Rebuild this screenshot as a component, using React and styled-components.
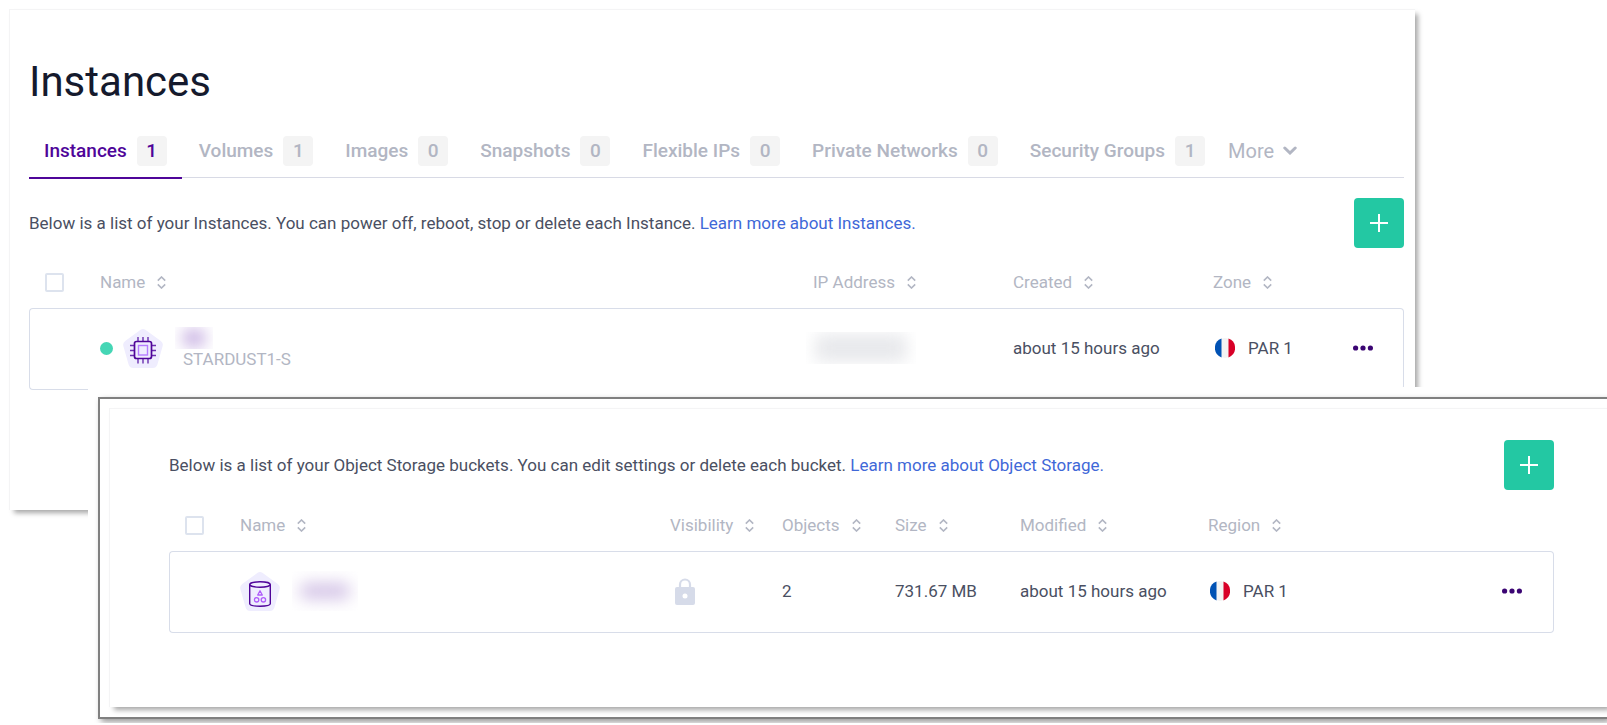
import React from 'react';
import styled, { createGlobalStyle } from 'styled-components';

const GlobalStyle = createGlobalStyle`
  * {
    box-sizing: border-box;
  }

  body {
    margin: 0;
    background: #fff;
    color: #4a4f62;
    font-family: Roboto, "Liberation Sans", sans-serif;
    font-size: 17px;
    line-height: 24px;
  }

  button {
    font: inherit;
    color: inherit;
    background: none;
    border: 0;
    padding: 0;
    cursor: pointer;
  }
`;

const Page = styled.main`
  padding-top: 9px;
  overflow: hidden;
`;

const InstancesPanel = styled.section`
  margin: 0 192px 0 9px;
  padding: 44px 11px 120px 19px;
  border: 1px solid #f4f4f5;
  border-right: 0;
  border-bottom: 0;
  box-shadow: 4px 4px 5px -1px rgba(0, 0, 0, 0.35);
`;

const Title = styled.h1`
  margin: 0 0 25px;
  color: #151a2d;
  font-size: 42px;
  font-weight: 400;
  line-height: 56px;
`;

const Tabs = styled.nav`
  display: flex;
  gap: 2px;
  height: 43px;
  border-bottom: 1px solid #d8dae5;
  color: #b2b6c3;
  font-size: 19px;
  font-weight: 500;
`;

const Tab = styled.a`
  display: flex;
  gap: 10px;
  height: 44px;
  padding: 0 15px 11px;
  align-items: center;
  border-bottom: 2px solid ${(props) => (props.$active ? '#4f0599' : 'transparent')};
  color: ${(props) => (props.$active ? '#4f0599' : 'inherit')};
  text-decoration: none;
  white-space: nowrap;
`;

const Badge = styled.span`
  width: 30px;
  border-radius: 4px;
  background: #f4f4f4;
  line-height: 30px;
  text-align: center;
`;

const MoreButton = styled.button`
  display: flex;
  gap: 9px;
  height: 31px;
  align-items: center;
  margin-left: 6px;
  font-size: 20px;
  font-weight: 400;
`;

const ListTop = styled.div`
  display: flex;
  align-items: center;
  justify-content: space-between;
  margin: ${(props) => (props.$spaced ? '20px 0 8px' : '0 0 9px')};

  p {
    margin: 0;
  }

  a {
    color: #3f68d8;
    text-decoration: none;
  }
`;

const AddButton = styled.button`
  display: grid;
  place-items: center;
  width: 50px;
  height: 50px;
  border-radius: 4px;
  background: #23c8a3;
`;

const Table = styled.table`
  width: 100%;
  table-layout: fixed;
  border-collapse: separate;
  border-spacing: 0;
`;

const Col = styled.col`
  width: ${(props) => (props.$width ? `${props.$width}px` : 'auto')};
`;

const HeadCell = styled.th`
  height: 52px;
  padding: 0;
  color: #b2b6c3;
  font-weight: 400;
  text-align: left;
`;

const SortButton = styled.button`
  display: flex;
  gap: 12px;
  align-items: center;
`;

const Cell = styled.td`
  height: 82px;
  padding: 0 0 2px;
  border: solid #d8dde9;
  border-width: 1px 0;
  white-space: nowrap;

  &:first-child {
    border-left-width: 1px;
    border-radius: 4px 0 0 4px;
  }

  &:last-child {
    border-right-width: 1px;
    border-radius: 0 4px 4px 0;
  }
`;

const Checkbox = styled.input`
  appearance: none;
  display: block;
  width: 19px;
  height: 19px;
  margin: 0 0 0 16px;
  border: 2px solid #dde3ee;
  border-radius: 2px;
`;

const NameGroup = styled.div`
  display: flex;
  align-items: center;
  gap: ${(props) => props.$gap}px;
`;

const StatusDot = styled.span`
  width: 13px;
  height: 13px;
  margin-right: 10px;
  border-radius: 50%;
  background: #45d6b5;
`;

const NameText = styled.div`
  padding-left: 12px;
`;

const ServerType = styled.div`
  margin-left: 8px;
  color: #b2b6c3;
  line-height: 20px;
`;

// Clipped box around a smudged value
const Hidden = styled.div`
  display: grid;
  place-items: center;
  width: ${(props) => props.$width}px;
  height: ${(props) => props.$height}px;
  overflow: hidden;

  &::before {
    content: '';
    width: ${(props) => props.$ink}px;
    height: 16px;
    border-radius: 6px;
    background: ${(props) => props.$color};
    filter: blur(8px);
  }
`;

const IpHidden = styled(Hidden)`
  margin-left: -7px;

  &::before {
    height: 28px;
  }
`;

const Place = styled.div`
  display: flex;
  align-items: center;
  gap: 13px;
  padding-left: 2px;
`;

const MenuButton = styled.button`
  display: flex;
  align-items: center;
  height: 24px;
`;

const LockIcon = styled.svg`
  display: block;
  margin-left: 5px;
`;

const StoragePanel = styled.section`
  position: relative;
  margin: -123px 0 0 88px;
  padding: 10px 0 4px 10px;
  background: #fff;
`;

const Frame = styled.div`
  padding: 9px 0 10px 9px;
  border: 2px solid #808080;
  border-right: 0;
  box-shadow: 3px 3px 6px rgba(0, 0, 0, 0.4);
`;

const FrameInner = styled.div`
  padding: 31px 53px 74px 59px;
  border: 1px solid #f4f4f5;
  border-right: 0;
  border-bottom: 0;
  box-shadow: 4px 4px 5px -1px rgba(0, 0, 0, 0.35);
`;

const SortIcon = () => (
  <svg width="9" height="13" viewBox="0 0 9 13" fill="none" stroke="#b2b6c3" strokeWidth="1.6" aria-hidden="true">
    <path d="M.8 4.600L4.500 1l3.700 3.600M.8 8.400L4.500 12l3.700-3.600" />
  </svg>
);

const PlusIcon = () => (
  <svg width="18" height="18" viewBox="0 0 18 18" stroke="#fff" strokeWidth="2" aria-hidden="true">
    <path d="M9 0v18M0 9h18" />
  </svg>
);

const Dots = () => (
  <svg width="20" height="6" viewBox="0 0 20 6" fill="#3b0573" aria-hidden="true">
    <circle cx="2.6" cy="3" r="2.6" />
    <circle cx="10" cy="3" r="2.6" />
    <circle cx="17.4" cy="3" r="2.6" />
  </svg>
);

const Pentagon = () => (
  <path
    d="M17.6.8Q20-.8 22.4.8L37.8 12Q40.6 14 39.6 17.200L34.400 35.500Q33.200 39 29.800 39H10.200Q6.800 39 5.600 35.500L.4 17.200Q-.6 14 2.200 12Z"
    fill="#efedfe"
  />
);

const ChipIcon = () => (
  <svg width="40" height="39" viewBox="0 0 40 39" fill="none" aria-hidden="true">
    <Pentagon />
    <path
      d="M15 12V8M20 12V8M25 12V8M15 34.500V30M20 34.500V30M25 34.500V30M11 16.500H7M11 21.500H7M11 26.500H7M33 16.500h-4M33 21.500h-4M33 26.500h-4"
      stroke="#6b2fb0"
      strokeWidth="1.400"
    />
    <rect x="11.500" y="12.500" width="17" height="17" rx="2" stroke="#4f0599" strokeWidth="1.700" />
    <rect x="15.500" y="16.500" width="9" height="9.500" stroke="#b57cff" strokeWidth="1.400" />
  </svg>
);

const BucketIcon = () => (
  <svg width="40" height="39" viewBox="0 0 40 39" fill="none" aria-hidden="true">
    <Pentagon />
    <g stroke="#4f0599" strokeWidth="1.400">
      <ellipse cx="20" cy="12.500" rx="10.300" ry="2.700" />
      <path d="M9.700 12.500v19.300c0 1.400 4.500 2.400 10.300 2.400s10.300-1 10.300-2.400V12.500" />
    </g>
    <g stroke="#b05cfa" strokeWidth="1.300">
      <path d="M20 18.800l-2.300 4.200h4.600z" strokeLinejoin="round" />
      <circle cx="16.600" cy="27.800" r="2.200" />
      <circle cx="23.400" cy="27.800" r="2.200" />
    </g>
  </svg>
);

const FrenchFlag = () => (
  <svg width="20" height="20" viewBox="0 0 20 20" aria-hidden="true">
    <circle cx="10" cy="10" r="10" fill="#f3f3f3" />
    <path d="M6.500.6a10 10 0 0 0 0 18.800z" fill="#0052b4" />
    <path d="M13.500.6a10 10 0 0 1 0 18.800z" fill="#d80027" />
  </svg>
);

const tabs = [
  { label: 'Instances', count: 1, active: true },
  { label: 'Volumes', count: 1 },
  { label: 'Images', count: 0 },
  { label: 'Snapshots', count: 0 },
  { label: 'Flexible IPs', count: 0 },
  { label: 'Private Networks', count: 0 },
  { label: 'Security Groups', count: 1 },
];

const ListTable = ({ widths, columns, children }) => (
  <Table>
    <colgroup>
      {widths.map((width, index) => (
        <Col key={index} $width={width} />
      ))}
    </colgroup>
    <thead>
      <tr>
        <HeadCell>
          <Checkbox type="checkbox" aria-label="Select all" />
        </HeadCell>
        {columns.map((column) => (
          <HeadCell key={column}>
            <SortButton>
              {column}
              <SortIcon />
            </SortButton>
          </HeadCell>
        ))}
        <HeadCell />
      </tr>
    </thead>
    <tbody>
      <tr>{children}</tr>
    </tbody>
  </Table>
);

const ZoneCell = () => (
  <Cell>
    <Place>
      <FrenchFlag />
      PAR 1
    </Place>
  </Cell>
);

const MenuCell = () => (
  <Cell>
    <MenuButton aria-label="More actions">
      <Dots />
    </MenuButton>
  </Cell>
);

const App = () => {
  return (
    <Page>
      <GlobalStyle />
      <InstancesPanel>
        <Title>Instances</Title>
        <Tabs>
          {tabs.map((tab) => (
            <Tab key={tab.label} href="#" $active={tab.active}>
              {tab.label}
              <Badge>{tab.count}</Badge>
            </Tab>
          ))}
          <MoreButton>
            More
            <svg width="14" height="9" viewBox="0 0 14 9" fill="none" stroke="#b2b6c3" strokeWidth="3" strokeLinecap="round" aria-hidden="true">
              <path d="M1.800 2L7 7l5.200-5" />
            </svg>
          </MoreButton>
        </Tabs>
        <ListTop $spaced>
          <p>
            Below is a list of your Instances. You can power off, reboot, stop or delete each Instance.{' '}
            <a href="#">Learn more about Instances.</a>
          </p>
          <AddButton aria-label="Create an Instance">
            <PlusIcon />
          </AddButton>
        </ListTop>
        <ListTable widths={[71, null, 200, 200, 140, 51]} columns={['Name', 'IP Address', 'Created', 'Zone']}>
          <Cell />
          <Cell>
            <NameGroup $gap={0}>
              <StatusDot />
              <ChipIcon />
              <NameText>
                <Hidden $width={38} $height={22} $ink={22} $color="#c0a6de" />
                <ServerType>STARDUST1-S</ServerType>
              </NameText>
            </NameGroup>
          </Cell>
          <Cell>
            <IpHidden $width={110} $height={32} $ink={92} $color="#e8e9ec" />
          </Cell>
          <Cell>about 15 hours ago</Cell>
          <ZoneCell />
          <MenuCell />
        </ListTable>
      </InstancesPanel>

      <StoragePanel>
        <Frame>
          <FrameInner>
            <ListTop>
              <p>
                Below is a list of your Object Storage buckets. You can edit settings or delete each bucket.{' '}
                <a href="#">Learn more about Object Storage.</a>
              </p>
              <AddButton aria-label="Create a bucket">
                <PlusIcon />
              </AddButton>
            </ListTop>
            <ListTable
              widths={[71, null, 112, 113, 125, 188, 294, 52]}
              columns={['Name', 'Visibility', 'Objects', 'Size', 'Modified', 'Region']}
            >
              <Cell />
              <Cell>
                <NameGroup $gap={12}>
                  <BucketIcon />
                  <Hidden $width={66} $height={40} $ink={50} $color="#d3c3e6" />
                </NameGroup>
              </Cell>
              <Cell>
                <LockIcon width="20" height="27" viewBox="0 0 20 27" role="img" aria-label="Private">
                  <path d="M5 10V6.500a5 5 0 0 1 10 0V10" fill="none" stroke="#d6dbe9" strokeWidth="2.200" />
                  <rect y="9" width="20" height="18" rx="2" fill="#d6dbe9" />
                  <circle cx="10" cy="18" r="2.500" fill="#fff" />
                </LockIcon>
              </Cell>
              <Cell>2</Cell>
              <Cell>731.67 MB</Cell>
              <Cell>about 15 hours ago</Cell>
              <ZoneCell />
              <MenuCell />
            </ListTable>
          </FrameInner>
        </Frame>
      </StoragePanel>
    </Page>
  );
};

export default App;
